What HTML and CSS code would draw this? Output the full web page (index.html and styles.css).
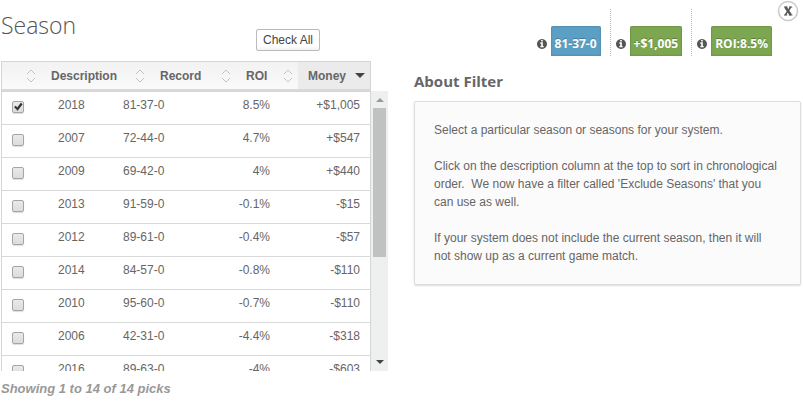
FILE: index.html
```html
<!DOCTYPE html>
<html lang="en">
<head>
  <meta charset="UTF-8">
  <meta name="viewport" content="width=device-width, initial-scale=1.0">
  <title>Season</title>
  <link rel="stylesheet" href="styles.css">
</head>
<body>
  <!-- shared icons -->
  <svg class="sprite" aria-hidden="true">
    <symbol id="icon-info" viewBox="0 128 1536 1536">
      <path d="M1024 1376v-160q0-14-9-23t-23-9h-96v-512q0-14-9-23t-23-9h-320q-14 0-23 9t-9 23v160q0 14 9 23t23 9h96v320h-96q-14 0-23 9t-9 23v160q0 14 9 23t23 9h448q14 0 23-9t9-23zm-128-896v-160q0-14-9-23t-23-9h-192q-14 0-23 9t-9 23v160q0 14 9 23t23 9h192q14 0 23-9t9-23zm640 416q0 209-103 385.5t-279.5 279.5-385.5 103-385.5-103-279.5-279.5-103-385.5 103-385.5 279.5-279.5 385.5-103 385.5 103 279.5 279.5 103 385.5z"/>
    </symbol>
    <symbol id="icon-sort" viewBox="0 0 10 14">
      <path d="M1 5l4-4 4 4M1 9l4 4 4-4" fill="none" stroke="#c4c4c4"/>
    </symbol>
    <symbol id="icon-down" viewBox="0 0 10 5">
      <path d="M0 0h10L5 5z"/>
    </symbol>
  </svg>

  <button class="close" type="button" aria-label="Close">
    <svg viewBox="0 0 22 22"><circle cx="11" cy="11" r="9.5" fill="#fff" stroke="#ccc" stroke-width="1.6"/><path d="M7 7h3.600M12 7h3.200M7 15h3.200M11.800 15h3.600" stroke="#555" stroke-width="1" fill="none"/><path d="M8.300 7l5.600 8" stroke="#555" stroke-width="2.400" fill="none"/><path d="M13.700 7l-5.400 8" stroke="#555" stroke-width="1.600" fill="none"/></svg>
  </button>

  <div class="filter">
    <!-- Season list -->
    <section class="picks">
      <div class="picks-head">
        <h1>Season</h1>
        <button class="btn" type="button">Check All</button>
      </div>

      <table class="grid grid-head">
        <colgroup><col class="h-check"><col><col class="h-record"><col class="h-roi"><col class="h-money"></colgroup>
        <thead>
          <tr>
            <th><div class="sort"><svg><use href="#icon-sort"/></svg></div></th>
            <th><div class="sort">Description<svg><use href="#icon-sort"/></svg></div></th>
            <th><div class="sort">Record<svg><use href="#icon-sort"/></svg></div></th>
            <th><div class="sort">ROI<svg><use href="#icon-sort"/></svg></div></th>
            <th class="sorted"><div class="sort">Money<svg class="caret"><use href="#icon-down"/></svg></div></th>
          </tr>
        </thead>
      </table>

      <div class="scroll">
        <div class="scroll-body">
          <table class="grid grid-body">
            <colgroup><col class="b-check"><col class="b-year"><col><col class="b-roi"><col class="b-money"></colgroup>
            <tbody>
              <tr><td><input type="checkbox" aria-label="2018" checked></td><td>2018</td><td>81-37-0</td><td class="num">8.5%</td><td class="num">+$1,005</td></tr>
              <tr><td><input type="checkbox" aria-label="2007"></td><td>2007</td><td>72-44-0</td><td class="num">4.7%</td><td class="num">+$547</td></tr>
              <tr><td><input type="checkbox" aria-label="2009"></td><td>2009</td><td>69-42-0</td><td class="num">4%</td><td class="num">+$440</td></tr>
              <tr><td><input type="checkbox" aria-label="2013"></td><td>2013</td><td>91-59-0</td><td class="num">-0.1%</td><td class="num">-$15</td></tr>
              <tr><td><input type="checkbox" aria-label="2012"></td><td>2012</td><td>89-61-0</td><td class="num">-0.4%</td><td class="num">-$57</td></tr>
              <tr><td><input type="checkbox" aria-label="2014"></td><td>2014</td><td>84-57-0</td><td class="num">-0.8%</td><td class="num">-$110</td></tr>
              <tr><td><input type="checkbox" aria-label="2010"></td><td>2010</td><td>95-60-0</td><td class="num">-0.7%</td><td class="num">-$110</td></tr>
              <tr><td><input type="checkbox" aria-label="2006"></td><td>2006</td><td>42-31-0</td><td class="num">-4.4%</td><td class="num">-$318</td></tr>
              <tr><td><input type="checkbox" aria-label="2016"></td><td>2016</td><td>89-63-0</td><td class="num">-4%</td><td class="num">-$603</td></tr>
            </tbody>
          </table>
        </div>
        <div class="scrollbar" aria-hidden="true">
          <svg class="arrow up"><use href="#icon-down"/></svg>
          <div class="thumb"></div>
          <svg class="arrow"><use href="#icon-down"/></svg>
        </div>
      </div>
      <p class="showing">Showing 1 to 14 of 14 picks</p>
    </section>

    <!-- Totals and help text -->
    <section class="about">
      <ul class="stats">
        <li><svg><use href="#icon-info"/></svg><span class="badge blue">81-37-0</span></li>
        <li><svg><use href="#icon-info"/></svg><span class="badge green">+$1,005</span></li>
        <li><svg><use href="#icon-info"/></svg><span class="badge green">ROI:8.5%</span></li>
      </ul>
      <h2>About Filter</h2>
      <div class="well">
        <p>Select a particular season or seasons for your system.</p>
        <p>Click on the description column at the top to sort in chronological order.&nbsp; We now have a filter called 'Exclude Seasons' that you can use as well.</p>
        <p>If your system does not include the current season, then it will not show up as a current game match.</p>
      </div>
    </section>
  </div>
</body>
</html>
```
FILE: styles.css
```css
* {
  box-sizing: border-box;
}
body {
  margin: 0;
  background: #fff;
  color: #666;
  font: 12px/18px "Liberation Sans", Arial, sans-serif;
}
h1, h2, p, ul {
  margin: 0;
  padding: 0;
}
.sprite {
  display: none;
}
.filter {
  display: grid;
  grid-template-columns: 1fr 1fr;
  gap: 26px;
  padding: 0 2px 0 1px;
}

/* season list */
.picks-head {
  display: flex;
  justify-content: space-between;
  height: 61px;
  padding-right: 68px;
}
h1 {
  padding-top: 7px;
  font: 300 23px/36px "Open Sans", sans-serif;
  color: #555;
}
.btn {
  height: 22px;
  margin-top: 29px;
  padding: 0 6px;
  border: 1px solid #bbb;
  border-radius: 2px;
  background: linear-gradient(#fff 80%, #f1f1f1);
  color: #444;
  font: inherit;
}
.grid {
  width: 100%;
  table-layout: fixed;
  border-collapse: separate;
  border-spacing: 0;
  border: 1px solid #d5d5d5;
  border-bottom: 0;
}
.grid-head {
  width: calc(100% - 17px);
}
.h-check { width: 39px; }
.h-record { width: 86px; }
.h-roi { width: 62px; }
.h-money { width: 72px; }
.b-check { width: 46px; }
.b-year { width: 65px; }
.b-roi { width: 80px; }
.b-money { width: 90px; }
th {
  height: 29px;
  padding: 0 5px 0 10px;
  border-bottom: 2px solid #d9d9d9;
  background: linear-gradient(#f2f2f2, #fafafa);
  text-align: left;
}
.sorted {
  background: #ebebeb;
}
.sort {
  display: flex;
  align-items: center;
  justify-content: space-between;
}
.sort svg {
  width: 10px;
  height: 14px;
  margin-left: auto;
}
.sort .caret {
  height: 5px;
  fill: #444;
}
.scroll {
  display: flex;
  height: 280px;
}
.scroll-body {
  flex: 1;
  overflow: hidden;
}
td {
  height: 33px;
  padding: 4px 10px 10px;
  border-bottom: 1px solid #d9d9d9;
  vertical-align: top;
}
.num {
  text-align: right;
}
td input {
  appearance: none;
  display: block;
  width: 12px;
  height: 12px;
  margin: 5px 0 0;
  border: 1px solid #a5a5a5;
  border-radius: 2px;
  background: linear-gradient(#e9e9e9, #dcdcdc);
  box-shadow: 0 1px 1px #ddd;
}
td input:checked::before {
  content: "";
  display: block;
  width: 10px;
  height: 10px;
  background: #333;
  clip-path: polygon(10% 50%, 28% 38%, 42% 55%, 78% 8%, 96% 22%, 46% 88%);
}
.scrollbar {
  display: flex;
  flex-direction: column;
  align-items: center;
  width: 17px;
  background: #eef0f0;
}
.arrow {
  width: 8px;
  height: 4px;
  margin: auto 0 7px;
  fill: #444;
}
.arrow.up {
  margin: 7px 0 6px;
  fill: #999;
  transform: rotate(180deg);
}
.thumb {
  width: 13px;
  height: 149px;
  background: #c0c2c1;
}
.showing {
  padding-top: 9px;
  font-size: 13px;
  font-weight: bold;
  font-style: italic;
  color: #999;
}

/* totals */
.stats {
  display: flex;
  justify-content: flex-end;
  padding: 9px 29px 0 0;
  list-style: none;
}
.stats li {
  display: flex;
  align-items: flex-end;
  gap: 4px;
  height: 47px;
  padding: 0 9px 0 5px;
  border-right: 1px dotted #bbb;
}
.stats li:last-child {
  padding-right: 0;
  border: 0;
}
.stats svg {
  width: 10px;
  height: 10px;
  margin-bottom: 7px;
  fill: #555;
}
.badge {
  height: 30px;
  padding: 9px 4px 3px;
  border-radius: 2px 2px 0 0;
  color: #fff;
  font: bold 12px/18px "Open Sans", sans-serif;
  text-shadow: 0 -1px 0 rgba(0, 0, 0, 0.25);
  box-shadow: inset 0 0 2px rgba(0, 0, 0, 0.3);
}
.blue {
  background: #5b9fc4;
}
.green {
  background: #7ca650;
}
h2 {
  padding: 13px 0 8px;
  font: bold 15px/24px "Open Sans", sans-serif;
}
.well {
  display: grid;
  gap: 18px;
  padding: 19px;
  border: 1px solid #ddd;
  border-radius: 2px;
  background: #fbfbfb;
  box-shadow: 0 1px 2px #ddd;
}
.close {
  position: absolute;
  top: 0;
  right: 4px;
  width: 22px;
  height: 22px;
  padding: 0;
  border: 0;
  background: none;
}
.close svg {
  display: block;
}
```
